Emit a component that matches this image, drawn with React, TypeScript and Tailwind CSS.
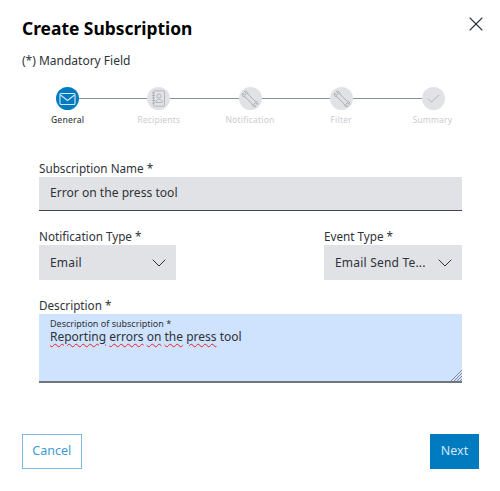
import { ChevronDown, X } from "lucide-react";

const MailIcon = () => (
  <svg width="17" height="14" viewBox="0 0 17 14" fill="none" stroke="#d6e8f5" strokeWidth="1.1">
    <rect x="1" y="1.500" width="15" height="11" rx="1" />
    <path d="M1.500 3 8.500 8.500 15.500 3" />
  </svg>
);

const BookIcon = () => (
  <svg width="15" height="17" viewBox="0 0 15 17" fill="none" stroke="#b4b8bd" strokeWidth="1">
    <rect x="2.500" y="0.800" width="11" height="15.400" rx="0.600" />
    <path d="M1 3h3M1 5.500h3M1 8h3M1 10.500h3M1 13h3" />
    <circle cx="8" cy="6" r="2" />
    <path d="M4.800 12.500c0-2.200 1.400-3.400 3.200-3.400s3.200 1.200 3.200 3.400z" />
  </svg>
);

const WrenchIcon = () => (
  <svg width="18" height="18" viewBox="0 0 18 18" fill="none" stroke="#a9adb2" strokeWidth="1" strokeLinejoin="round">
    <path d="M1.500 3.300 3.700 5.200 5.300 3.700 3.300 1.500C5.200 0.800 7 2 6.900 4.100L13.900 11.100C16 11 17.200 12.800 16.500 14.700L14.500 12.600 12.800 14.200 14.800 16.400C12.800 17.200 11 15.800 11.100 13.800L4.100 6.900C2.100 7 0.800 5.200 1.500 3.300Z" />
  </svg>
);

const CheckIcon = () => (
  <svg width="13" height="9" viewBox="0 0 13 9" fill="none" stroke="#b4b8bd" strokeWidth="1">
    <path d="M1 4.500 4.500 8 12 1" />
  </svg>
);

const steps = [
  { label: "General", icon: <MailIcon /> },
  { label: "Recipients", icon: <BookIcon /> },
  { label: "Notification", icon: <WrenchIcon /> },
  { label: "Filter", icon: <WrenchIcon /> },
  { label: "Summary", icon: <CheckIcon /> },
];

function Stepper() {
  return (
    <div className="mt-[17px]">
      <div className="flex items-center px-[33.500px]">
        {steps.map((s, i) => (
          <div key={s.label} className={i < 4 ? "flex flex-1 items-center" : "flex items-center"}>
            <div className={`flex h-[23px] w-[23px] shrink-0 items-center justify-center rounded-full ${i === 0 ? "bg-[#007bc0]" : "bg-[#e0e2e5]"}`}>
              {s.icon}
            </div>
            {i < 4 && <div className="h-[1.500px] flex-1 bg-[#8a9097]" />}
          </div>
        ))}
      </div>
      <div className="mt-[4px] grid grid-cols-5 text-center text-[8.500px] leading-[12px] tracking-[0.2px]">
        {steps.map((s, i) => (
          <span key={s.label} className={i === 0 ? "font-medium text-[#3a3f44]" : "text-[#c9ccd0]"}>
            {s.label}
          </span>
        ))}
      </div>
    </div>
  );
}

function Select({ value, width }: { value: string; width: string }) {
  return (
    <div className={`flex h-[35px] items-center justify-between bg-[#e0e2e5] pl-[11px] pr-[5px] text-[12px] tracking-[0.2px] text-[#2e3338] ${width}`}>
      <span>{value}</span>
      <ChevronDown size={24} strokeWidth={1} className="text-[#2e3338]" />
    </div>
  );
}

const wavy = "underline decoration-[#e8202a] decoration-wavy decoration-1 underline-offset-[2px]";

export default function App() {
  return (
    <div className="h-[491px] w-[500px] bg-white text-[#1f2327]" style={{ fontFamily: "'Noto Sans', sans-serif" }}>
      <div className="px-[22px] pt-[15px]">
        <div className="flex items-start justify-between">
          <h1 className="text-[17.400px] font-bold leading-[26px] text-black">Create Subscription</h1>
          <X size={24} strokeWidth={1.1} className="mt-[-3px] mr-[-10px] text-[#2e3338]" />
        </div>
        <p className="mt-[11px] text-[12px] leading-[18px] text-[#2e3338]">(*) Mandatory Field</p>
        <Stepper />
        <div className="mt-[34px] pl-[17px] pr-[16px]">
          <label className="block text-[11.700px] leading-[17px] text-[#2e3338]">Subscription Name *</label>
          <div className="flex h-[34px] items-center border-b border-[#43464a] bg-[#e0e2e5] pl-[11px] text-[12.100px] text-[#2e3338]">
            Error on the press tool
          </div>
          <div className="mt-[17px] flex justify-between">
            <div>
              <label className="block text-[11.700px] leading-[17px] text-[#2e3338]">Notification Type *</label>
              <Select value="Email" width="w-[137px]" />
            </div>
            <div>
              <label className="block text-[11.700px] leading-[17px] text-[#2e3338]">Event Type *</label>
              <Select value="Email Send Te..." width="w-[138px]" />
            </div>
          </div>
          <label className="mt-[17px] block text-[11.700px] leading-[17px] text-[#2e3338]">Description *</label>
          <div className="relative h-[69px] border-b-2 border-[#71767c] bg-[#cfe2fe] pl-[11px] pt-[4px] text-[#2e3338]">
            <div className="text-[9px] leading-[12px]">Description of subscription *</div>
            <div className="text-[12px] leading-[14px]">
              <span className={wavy}>Reporting</span> <span className={wavy}>errors</span>{" "}
              <span className={wavy}>on</span> <span className={wavy}>the</span>{" "}
              <span className={wavy}>press</span> tool
            </div>
            <svg className="absolute bottom-0 right-0" width="11" height="11" viewBox="0 0 11 11" stroke="#71767c" strokeWidth="0.8">
              <path d="M0 11 11 0M3 11 11 3M6 11 11 6M9 11 11 9" />
            </svg>
          </div>
        </div>
        <div className="mt-[51px] flex items-center justify-between">
          <button className="ml-[-0.500px] h-[35px] w-[60.500px] border-[1.500px] border-[#7dbbdf] bg-white text-[12.500px] text-[#3d9bd3]">Cancel</button>
          <button className="mr-[-1px] h-[35px] w-[49px] bg-[#007bc0] text-[12.500px] text-[#cfe6f5]">Next</button>
        </div>
      </div>
    </div>
  );
}
